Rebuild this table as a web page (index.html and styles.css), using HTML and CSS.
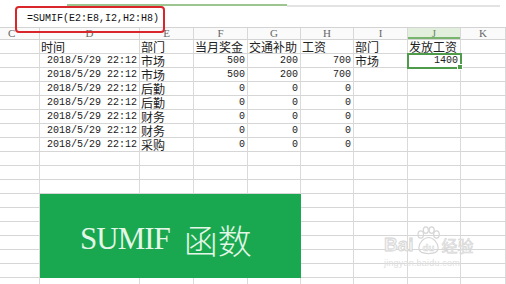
FILE: index.html
```html
<!DOCTYPE html>
<html lang="zh-CN">
<head>
<meta charset="utf-8">
<title>SUMIF 函数</title>
<link rel="stylesheet" href="styles.css">
</head>
<body>
<div class="page">
  <div class="topbar"><span class="track-on"></span><span class="track-off"></span></div>
  <div class="formula">=SUMIF(E2:E8,I2,H2:H8)</div>
  <div class="sheet">
    <div class="hd">C</div><div class="hd">D</div><div class="hd">E</div><div class="hd">F</div><div class="hd">G</div><div class="hd">H</div><div class="hd">I</div><div class="hd on">J</div><div class="hd">K</div>

    <div class="c"></div><div class="c t">时间</div><div class="c t">部门</div><div class="c t">当月奖金</div><div class="c t">交通补助</div><div class="c t">工资</div><div class="c t">部门</div><div class="c t">发放工资</div><div class="c"></div>

    <div class="c"></div><div class="c n">2018/5/29 22:12</div><div class="c t">市场</div><div class="c n">500</div><div class="c n">200</div><div class="c n">700</div><div class="c t">市场</div><div class="c n active">1400</div><div class="c"></div>

    <div class="c"></div><div class="c n">2018/5/29 22:12</div><div class="c t">市场</div><div class="c n">500</div><div class="c n">200</div><div class="c n">700</div><div class="c"></div><div class="c"></div><div class="c"></div>

    <div class="c"></div><div class="c n">2018/5/29 22:12</div><div class="c t">后勤</div><div class="c n">0</div><div class="c n">0</div><div class="c n">0</div><div class="c"></div><div class="c"></div><div class="c"></div>

    <div class="c"></div><div class="c n">2018/5/29 22:12</div><div class="c t">后勤</div><div class="c n">0</div><div class="c n">0</div><div class="c n">0</div><div class="c"></div><div class="c"></div><div class="c"></div>

    <div class="c"></div><div class="c n">2018/5/29 22:12</div><div class="c t">财务</div><div class="c n">0</div><div class="c n">0</div><div class="c n">0</div><div class="c"></div><div class="c"></div><div class="c"></div>

    <div class="c"></div><div class="c n">2018/5/29 22:12</div><div class="c t">财务</div><div class="c n">0</div><div class="c n">0</div><div class="c n">0</div><div class="c"></div><div class="c"></div><div class="c"></div>

    <div class="c"></div><div class="c n">2018/5/29 22:12</div><div class="c t">采购</div><div class="c n">0</div><div class="c n">0</div><div class="c n">0</div><div class="c"></div><div class="c"></div><div class="c"></div>

    <div class="c"></div><div class="c"></div><div class="c"></div><div class="c"></div><div class="c"></div><div class="c"></div><div class="c"></div><div class="c"></div><div class="c"></div>
    <div class="c"></div><div class="c"></div><div class="c"></div><div class="c"></div><div class="c"></div><div class="c"></div><div class="c"></div><div class="c"></div><div class="c"></div>
    <div class="c"></div><div class="c"></div><div class="c"></div><div class="c"></div><div class="c"></div><div class="c"></div><div class="c"></div><div class="c"></div><div class="c"></div>

    <div class="banner"><span class="latin">SUMIF</span><span class="cjk">函数</span></div>

    <div class="c"></div><div class="c"></div><div class="c"></div><div class="c"></div><div class="c"></div>
    <div class="c"></div><div class="c"></div><div class="c"></div><div class="c"></div><div class="c"></div>
    <div class="c"></div><div class="c"></div><div class="c"></div><div class="c"></div><div class="c"></div>
    <div class="c"></div><div class="c"></div><div class="c"></div><div class="c"></div><div class="c"></div>
    <div class="c"></div><div class="c"></div><div class="c"></div><div class="c"></div><div class="c"></div>
    <div class="c"></div><div class="c"></div><div class="c"></div><div class="c"></div><div class="c"></div>

    <div class="c"></div><div class="c"></div><div class="c"></div><div class="c"></div><div class="c"></div><div class="c"></div><div class="c"></div><div class="c"></div><div class="c"></div>
  </div>

  <div class="watermark">
    <div class="wm-logo">
      <span class="wm-bai">Bai</span>
      <svg class="wm-paw" width="27" height="29" viewBox="0 0 22 24">
        <ellipse cx="4.6" cy="7" rx="2.3" ry="3" fill="none" stroke="#d6d6d6" stroke-width="1"/>
        <ellipse cx="8.8" cy="3.4" rx="2.1" ry="2.7" fill="none" stroke="#d6d6d6" stroke-width="1"/>
        <ellipse cx="13.6" cy="3.4" rx="2.1" ry="2.7" fill="none" stroke="#d6d6d6" stroke-width="1"/>
        <ellipse cx="17.6" cy="7" rx="2.3" ry="3" fill="none" stroke="#d6d6d6" stroke-width="1"/>
        <path d="M11 9.5 C7 9.5 3 14 3 18 C3 21.5 6 22.8 11 22.8 C16 22.8 19 21.5 19 18 C19 14 15 9.5 11 9.5 Z" fill="none" stroke="#d6d6d6" stroke-width="1"/>
        <text x="11" y="20.5" text-anchor="middle" font-family="Liberation Sans, sans-serif" font-weight="bold" font-size="8" fill="#f2f2f2" stroke="#d6d6d6" stroke-width="0.4">du</text>
      </svg>
      <span class="wm-jy">经验</span>
    </div>
    <div class="wm-url">jingyan.baidu.com</div>
  </div>
</div>
</body>
</html>
```

FILE: styles.css
```css
html, body {
  margin: 0;
  padding: 0;
  background: #ffffff;
}

.page {
  position: relative;
  width: 506px;
  height: 284px;
  overflow: hidden;
  background: #ffffff;
  color: #1c1c1c;
}

.topbar {
  height: 27px;
  box-sizing: border-box;
  padding: 4px 0 0 67px;
  display: flex;
  align-items: flex-start;
}

.track-on {
  display: block;
  width: 220px;
  height: 2px;
  background: #9cc590;
}

.track-off {
  display: block;
  width: 213px;
  height: 2px;
  margin-top: 1px;
  background: #e3e3e3;
}

.formula {
  position: absolute;
  left: 15px;
  top: 6px;
  width: 150px;
  height: 27px;
  box-sizing: border-box;
  border: 2px solid #d8262b;
  border-radius: 4px;
  padding-left: 10px;
  font-family: "Liberation Mono", monospace;
  font-size: 10px;
  line-height: 21px;
  color: #111;
}

.sheet {
  display: grid;
  grid-template-columns: 40px 100px 54px 54px 53px 53px 54px 53px 45px;
  grid-template-rows: 12px repeat(18, 14px);
  border-top: 1px solid #d3d3d3;
}

.hd {
  box-sizing: border-box;
  border-right: 1px solid #d8d8d8;
  border-bottom: 1px solid #d3d3d3;
  background: #fafafa;
  font-family: "Liberation Serif", serif;
  font-size: 11px;
  line-height: 11px;
  color: #666;
  text-align: center;
}

.hd:first-child {
  text-align: left;
  padding-left: 8px;
}

.hd.on {
  background: #e2efdc;
  box-shadow: inset 0 -2px 0 #79b46e;
  color: #6a8a66;
}

.c {
  box-sizing: border-box;
  border-right: 1px solid #dadada;
  border-bottom: 1px solid #d6d6d6;
  white-space: nowrap;
}

.t {
  padding-left: 1px;
  font-family: "Noto Sans CJK SC", sans-serif;
  font-size: 12px;
  line-height: 13px;
  color: #222;
}

.n {
  padding-right: 2px;
  text-align: right;
  font-family: "Liberation Mono", monospace;
  font-size: 10px;
  line-height: 14px;
  color: #222;
}

.active {
  position: relative;
  outline: 2px solid #4e9c4b;
  outline-offset: -1px;
}

.active::after {
  content: "";
  position: absolute;
  right: -3px;
  bottom: -3px;
  width: 4px;
  height: 4px;
  background: #4e9c4b;
  border: 1px solid #ffffff;
}

.banner {
  grid-column: 2 / 6;
  grid-row: 13 / 19;
  background: #19a84f;
  display: flex;
  align-items: center;
  gap: 14px;
  padding: 6px 0 0 40px;
  color: #e3f6e7;
}

.latin {
  font-family: "Liberation Serif", serif;
  font-size: 31px;
  letter-spacing: -1px;
}

.cjk {
  font-family: "Noto Sans CJK SC", sans-serif;
  font-size: 34px;
  font-weight: 200;
  letter-spacing: 0;
}

.watermark {
  position: absolute;
  left: 384px;
  top: 225px;
  width: 92px;
}

.wm-logo {
  display: flex;
  align-items: flex-end;
  height: 30px;
}

.wm-bai {
  font-family: "Liberation Sans", sans-serif;
  font-size: 19px;
  font-weight: bold;
  line-height: 20px;
  color: #f3f3f3;
  -webkit-text-stroke: 0.8px #d4d4d4;
}

.wm-paw {
  display: block;
  margin: 0 0 0 1px;
}

.wm-jy {
  font-family: "Noto Sans CJK SC", sans-serif;
  font-size: 16px;
  line-height: 20px;
  color: #f1f1f1;
  -webkit-text-stroke: 0.6px #d4d4d4;
}

.wm-url {
  font-family: "Liberation Sans", sans-serif;
  font-size: 9px;
  line-height: 10px;
  margin-top: 3px;
  color: #dedede;
  letter-spacing: 0.2px;
}
```
